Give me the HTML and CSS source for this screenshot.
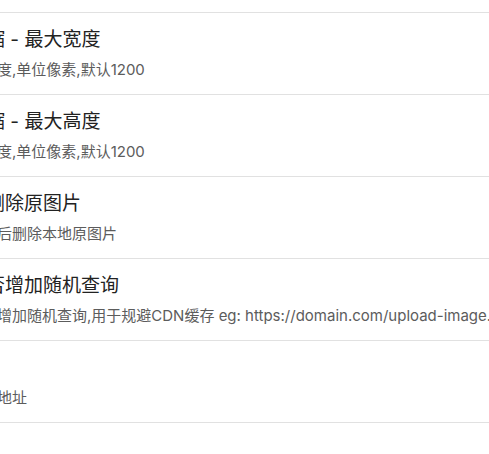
FILE: index.html
```html
<!DOCTYPE html>
<html lang="zh-CN">
<head>
<meta charset="utf-8">
<title>设置</title>
<link rel="stylesheet" href="styles.css">
</head>
<body>
<div class="settings">
  <div class="setting-item">
    <div class="setting-name">压缩 - 最大宽度</div>
    <div class="setting-desc">图宽度,单位像素,默认1200</div>
  </div>
  <div class="setting-item">
    <div class="setting-name">压缩 - 最大高度</div>
    <div class="setting-desc">图高度,单位像素,默认1200</div>
  </div>
  <div class="setting-item">
    <div class="setting-name">并删除原图片</div>
    <div class="setting-desc">上传后删除本地原图片</div>
  </div>
  <div class="setting-item">
    <div class="setting-name">是否增加随机查询</div>
    <div class="setting-desc">是否增加随机查询,用于规避CDN缓存 eg: https://domain.com/upload-image.png?t=1700000000</div>
  </div>
  <div class="setting-item">
    <div class="setting-name">域</div>
    <div class="setting-desc">域名地址</div>
  </div>
  <div class="setting-item">
    <div class="setting-name">路</div>
    <div class="setting-desc">上传路径</div>
  </div>
</div>
</body>
</html>
```

FILE: styles.css
```css
html, body {
  margin: 0;
  padding: 0;
  background: #ffffff;
  overflow: hidden;
}

body {
  width: 489px;
  height: 454px;
  font-family: Inter, "Noto Sans CJK SC", sans-serif;
}

.settings {
  padding-top: 12px;
  margin-left: -33px;
  width: 900px;
}

.setting-item {
  border-top: 1px solid #e1e1e1;
  padding: 14px 0;
  white-space: nowrap;
}

.setting-name {
  font-size: 19px;
  line-height: 25px;
  color: #222222;
}

.setting-desc {
  margin-top: 7px;
  font-size: 15px;
  line-height: 21px;
  color: #5c5c5c;
}
```
